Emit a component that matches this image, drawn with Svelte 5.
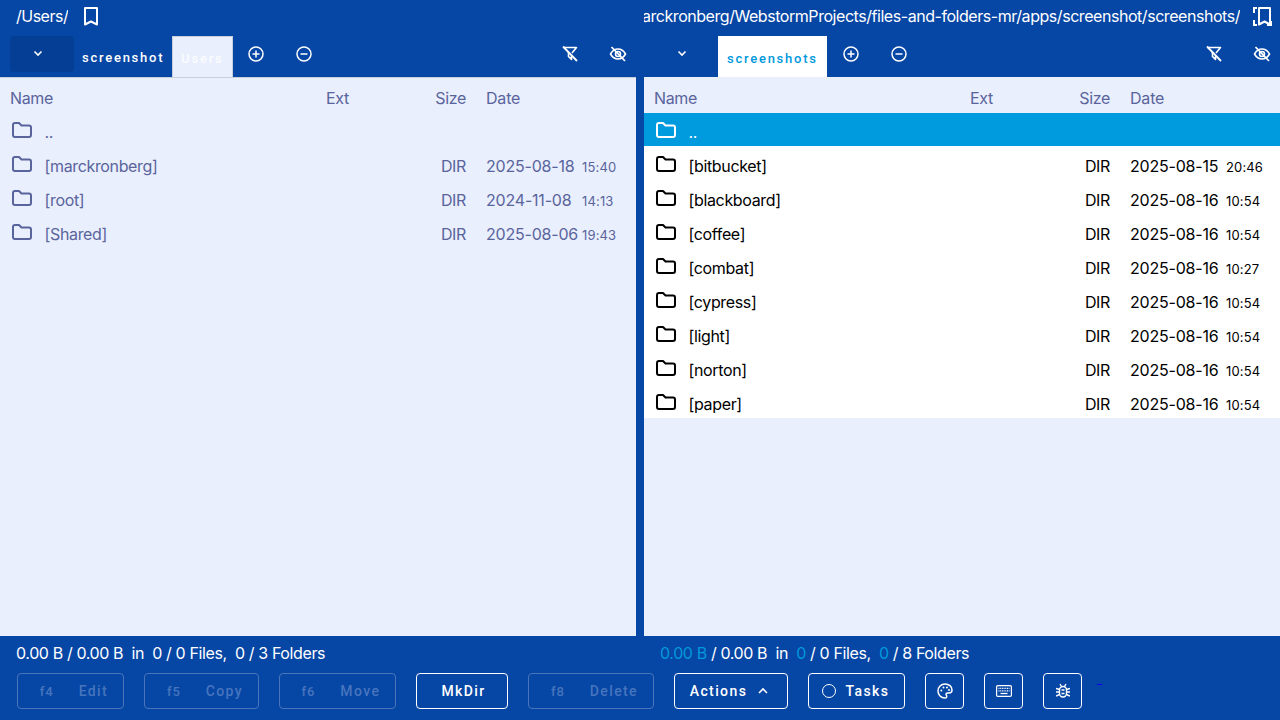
<script>
  const leftRows = [
    { name: '[marckronberg]', date: '2025-08-18', time: '15:40' },
    { name: '[root]', date: '2024-11-08', time: '14:13' },
    { name: '[Shared]', date: '2025-08-06', time: '19:43' }
  ];
  const rightRows = [
    { name: '[bitbucket]', date: '2025-08-15', time: '20:46' },
    { name: '[blackboard]', date: '2025-08-16', time: '10:54' },
    { name: '[coffee]', date: '2025-08-16', time: '10:54' },
    { name: '[combat]', date: '2025-08-16', time: '10:27' },
    { name: '[cypress]', date: '2025-08-16', time: '10:54' },
    { name: '[light]', date: '2025-08-16', time: '10:54' },
    { name: '[norton]', date: '2025-08-16', time: '10:54' },
    { name: '[paper]', date: '2025-08-16', time: '10:54' }
  ];
  const panes = [
    { side: 'left', path: '/Users/', rows: leftRows, tabs: ['screenshot', 'Users'] },
    { side: 'right', path: '/Users/marckronberg/WebstormProjects/files-and-folders-mr/apps/screenshot/screenshots/', rows: rightRows, tabs: ['screenshots'] }
  ];
  const fnButtons = [
    { key: 'f4', label: 'Edit', cls: 'edit' },
    { key: 'f5', label: 'Copy', cls: 'copy' },
    { key: 'f6', label: 'Move', cls: 'move' }
  ];
</script>

{#snippet folder()}
  <svg class="folder" width="20" height="16" viewBox="0 0 20 16" fill="none" stroke="currentColor" stroke-width="2" stroke-linejoin="round" aria-hidden="true">
    <path d="M1 3a2 2 0 0 1 2-2h4l2.500 2.500H17a2 2 0 0 1 2 2V13a2 2 0 0 1-2 2H3a2 2 0 0 1-2-2z" />
  </svg>
{/snippet}

{#snippet row(name, date, time, cls)}
  <div class="row {cls}">
    <span class="c-name">{@render folder()}<span class="label">{name}</span></span>
    <span class="c-ext"></span>
    <span class="c-size">{date ? 'DIR' : ''}</span>
    <span class="c-date"><span class="day">{date}</span><small>{time}</small></span>
  </div>
{/snippet}

<main class="app">
  <div class="panes">
    {#each panes as pane}
      <section class="pane {pane.side}">
        <div class="path-bar">
          <div class="path"><span>{pane.path}</span></div>
          <svg class="bookmark" width="24" height="24" viewBox="0 0 24 24" fill="none" stroke="#fff" stroke-width="2" aria-hidden="true">
            {#if pane.side === 'left'}
              <path d="M6 4h12v16.500l-6-3-6 3z" stroke-linejoin="round" />
            {:else}
              <path d="M10 4h11v16.500l-5.500-3-5.500 3z" stroke-linejoin="round" />
              <path d="M8 4H5v5M5 16v5h3M18 21h4v-4" />
            {/if}
          </svg>
        </div>

        <div class="tab-bar">
          <div class="menu-btn">
            <svg width="12" height="12" viewBox="0 0 12 12" fill="none" stroke="#fff" stroke-width="1.600"><path d="M2.500 4.500 6 8l3.500-3.500" /></svg>
          </div>
          <div class="tabs">
            {#each pane.tabs as tab, i}
              <div class="tab" class:active={i === pane.tabs.length - 1}>{tab}</div>
            {/each}
          </div>
          <button class="round" aria-label="Add tab">
            <svg width="18" height="18" viewBox="0 0 18 18" fill="none" stroke="#fff" stroke-width="1.500"><circle cx="9" cy="9" r="7" /><path d="M5.500 9h7M9 5.500v7" /></svg>
          </button>
          <button class="round" aria-label="Close tab">
            <svg width="18" height="18" viewBox="0 0 18 18" fill="none" stroke="#fff" stroke-width="1.500"><circle cx="9" cy="9" r="7" /><path d="M5.500 9h7" /></svg>
          </button>
          <div class="spacer"></div>
          <button class="round filter" aria-label="Filter off">
            <svg width="18" height="18" viewBox="0 0 18 18" fill="none" stroke="#fff" stroke-width="1.600" stroke-linejoin="round"><path d="M2.500 2.500h13L11 8M7.500 7v4.500l3 3V11" /><path d="M2 1.500 16 16" stroke-width="1.800" /></svg>
          </button>
          <button class="round hide" aria-label="Hide">
            <svg width="18" height="18" viewBox="0 0 18 18" fill="none" stroke="#fff" stroke-width="1.600"><path d="M1.500 9C3.500 5.500 6 4 9 4s5.500 1.500 7.500 5c-2 3.500-4.500 5-7.500 5S3.500 12.500 1.500 9z" /><circle cx="9" cy="9" r="2.500" /><path d="M2.500 2 16 16" stroke-width="1.800" /></svg>
          </button>
        </div>

        <div class="list">
          <div class="head">
            <span class="c-name">Name</span>
            <span class="c-ext">Ext</span>
            <span class="c-size">Size</span>
            <span class="c-date">Date</span>
          </div>
          <div class="body">
            {@render row('..', '', '', pane.side === 'right' ? 'parent selected' : 'parent')}
            {#each pane.rows as r}
              {@render row(r.name, r.date, r.time, pane.side === 'right' ? 'focused' : '')}
            {/each}
          </div>
        </div>

        <div class="status">
          <span class="sel">0.00 B</span> / 0.00 B &nbsp;in &nbsp;<span class="sel">0</span> / 0 Files, &nbsp;<span class="sel">0</span> / {pane.rows.length} Folders
        </div>
      </section>
    {/each}
  </div>

  <footer class="buttons">
    {#each fnButtons as b}
      <button class="btn fn {b.cls}" disabled><span class="key">{b.key}</span>{b.label}</button>
    {/each}
    <button class="btn mkdir">MkDir</button>
    <button class="btn fn delete" disabled><span class="key">f8</span>Delete</button>
    <button class="btn actions">
      Actions
      <svg width="12" height="12" viewBox="0 0 12 12" fill="none" stroke="#fff" stroke-width="1.600"><path d="M2 8l4-4 4 4" /></svg>
    </button>
    <button class="btn tasks"><span class="ring"></span>Tasks</button>
    <button class="btn icon palette" aria-label="Theme">
      <svg width="18" height="18" viewBox="0 0 18 18" fill="none" stroke="#fff" stroke-width="1.500">
        <path d="M9 2C5 2 2 5 2 9s3 7 7 7c1.200 0 1.800-.8 1.800-1.600 0-1.200-.8-1.400-.8-2.200 0-.8.700-1.200 1.500-1.200h1.500c2 0 3-1.300 3-3C16 4.500 13 2 9 2z" />
        <g fill="#fff" stroke="none"><circle cx="5.300" cy="8.500" r="1" /><circle cx="7.500" cy="5.500" r="1" /><circle cx="11" cy="5.500" r="1" /><circle cx="13" cy="8" r="1" /></g>
      </svg>
    </button>
    <button class="btn icon keyboard" aria-label="Keyboard">
      <svg width="16" height="12" viewBox="0 0 16 12" fill="none" stroke="#fff">
        <rect x=".6" y=".6" width="14.800" height="10.800" rx="1.200" stroke-width="1.200" />
        <path d="M2.500 3.300h11M2.500 5.800h11" stroke-width="1.300" stroke-dasharray="1 .7" />
        <path d="M4.500 8.500h7" stroke-width="1.300" />
      </svg>
    </button>
    <button class="btn icon bug" aria-label="Debug">
      <svg width="14" height="16" viewBox="0 0 14 16" fill="none" stroke="#fff" stroke-width="1.400">
        <rect x="3.500" y="3.500" width="7" height="10.500" rx="3.500" />
        <path d="M4 1l1.500 2.500M10 1 8.500 3.500M0 5.500l3.500 1M14 5.500l-3.500 1M0 9h3.500M14 9h-3.500M0 13l3.500-1.500M14 13l-3.500-1.500M5.500 7h3M5.500 10.500h3" />
      </svg>
    </button>
    <span class="link-dash">&nbsp;</span>
  </footer>
</main>

<style>
  :global(body) {
    margin: 0;
    background: #0646a5;
    overflow: hidden;
  }

  .app {
    width: 1280px;
    height: 720px;
    display: flex;
    flex-direction: column;
    background: #0646a5;
    color: #fff;
    font-family: Inter, "Liberation Sans", sans-serif;
    font-size: 16px;
  }

  button {
    font: inherit;
    letter-spacing: inherit;
    color: inherit;
    background: none;
    border: 0;
    padding: 0;
  }

  .panes {
    display: grid;
    grid-template-columns: 636px 636px;
    gap: 8px;
  }

  .pane {
    min-width: 0;
    display: flex;
    flex-direction: column;
  }

  /* Pfadzeile */
  .path-bar {
    height: 36px;
    display: flex;
    align-items: center;
    padding-left: 16px;
    padding-right: 7px;
    gap: 11px;
    overflow: hidden;
    letter-spacing: -0.5px;
  }

  .right .path-bar {
    padding-left: 0;
    gap: 9px;
    letter-spacing: -0.45px;
  }

  .path {
    overflow: hidden;
    white-space: nowrap;
    display: flex;
    justify-content: flex-end;
    line-height: 32px;
    margin-top: -4px;
  }

  .right .path {
    flex: 1;
  }

  .bookmark {
    flex: none;
    margin-top: -4px;
  }

  /* Tabs */
  .tab-bar {
    height: 41px;
    display: flex;
    align-items: flex-start;
    padding-left: 10px;
    font-family: Roboto, sans-serif;
    font-size: 13px;
    font-weight: 500;
    letter-spacing: 1.750px;
  }

  .menu-btn {
    width: 64px;
    height: 36px;
    flex: none;
    border-radius: 4px;
    background: #053f95;
    display: flex;
    align-items: center;
    justify-content: center;
    padding: 0 8px 2px 0;
    box-sizing: border-box;
  }

  .right .menu-btn {
    background: transparent;
  }

  .tabs {
    display: flex;
    height: 41px;
  }

  .tab {
    height: 41px;
    box-sizing: border-box;
    padding: 14px 8px 0;
    line-height: 16px;
  }

  .tab.active {
    background: #e9effd;
    color: #fbfcff;
    border: 1px solid #c7cfdc;
    border-width: 1px 1px 0;
    padding: 14px 8px 0;
  }

  .left .tab.active {
    padding-right: 9px;
    margin-right: -1px;
  }

  .right .tab.active {
    background: #fff;
    color: #0099dc;
    border-color: #fff;
  }

  .round {
    width: 48px;
    height: 36px;
    flex: none;
    display: flex;
    align-items: center;
    justify-content: center;
  }

  .round.filter {
    margin-right: 6px;
  }

  .round.hide {
    width: 36px;
  }

  .spacer {
    flex: 1;
  }

  /* Liste */
  .list {
    height: 559px;
    background: #e9effd;
    color: #5a649c;
    border-top: 1px solid #c7cfdc;
    box-sizing: border-box;
    letter-spacing: -0.35px;
  }

  .right .list {
    border-top-color: #e9effd;
  }

  .head,
  .row {
    display: grid;
    grid-template-columns: 316px 90px 50px 1fr;
    padding-left: 10px;
    align-items: center;
    box-sizing: border-box;
  }

  .head {
    height: 35px;
    padding-top: 4px;
  }

  .row {
    height: 34px;
    padding-top: 6px;
    white-space: nowrap;
  }

  .row.parent {
    height: 33px;
    padding-top: 4px;
  }

  .right .row.focused {
    background: #fff;
    color: #000;
  }

  .row.selected {
    background: #009ade;
    color: #fff;
  }

  .c-size {
    text-align: right;
  }

  .c-date {
    padding-left: 20px;
    white-space: nowrap;
    letter-spacing: -0.2px;
  }

  .day {
    display: inline-block;
    width: 96px;
  }

  .c-date small {
    font-size: 13px;
    letter-spacing: 0.15px;
  }

  .c-name {
    display: flex;
    align-items: center;
  }

  .folder {
    margin-left: 2px;
    margin-top: -5px;
    flex: none;
  }

  .parent .folder {
    margin-top: -3px;
  }

  .label {
    margin-left: 12.500px;
  }

  /* Status */
  .status {
    height: 34px;
    line-height: 34px;
    padding-left: 16px;
    white-space: nowrap;
    letter-spacing: -0.38px;
  }

  .right .sel {
    color: #0099dc;
  }

  /* Buttons */
  .buttons {
    display: flex;
    align-items: flex-start;
    padding-left: 17px;
    margin-top: 3px;
    font-family: Roboto, sans-serif;
    font-size: 14px;
    font-weight: 500;
    letter-spacing: 1.400px;
    line-height: 1;
  }

  .btn {
    height: 36px;
    box-sizing: border-box;
    border: 1px solid #fff;
    border-radius: 4px;
    display: flex;
    align-items: center;
    justify-content: center;
    flex: none;
  }

  .fn {
    border-color: #4a76b9;
    color: #4675bd;
    padding-left: 7px;
  }

  .key {
    margin-right: 25px;
    font-size: 13px;
    letter-spacing: 0.900px;
  }

  .edit { width: 107px; margin-right: 20px; }
  .copy { width: 115px; margin-right: 20px; }
  .move { width: 117px; margin-right: 20px; }
  .mkdir { width: 92px; margin-right: 20px; padding-left: 3px; }
  .delete { width: 126px; margin-right: 20px; }
  .actions { width: 114px; margin-right: 20px; gap: 10px; padding-right: 3px; }
  .tasks { width: 97px; margin-right: 20px; gap: 10px; padding-right: 2px; }
  .palette { width: 39px; margin-right: 20px; }
  .keyboard { width: 39px; margin-right: 20px; }
  .bug { width: 39px; margin-right: 15px; }

  .ring {
    width: 12px;
    height: 12px;
    border: 1.500px solid #fff;
    border-radius: 50%;
    box-sizing: content-box;
  }

  .link-dash {
    display: block;
    width: 5px;
    height: 1px;
    margin-top: 11px;
    background: #0000ee;
    overflow: hidden;
  }
</style>
